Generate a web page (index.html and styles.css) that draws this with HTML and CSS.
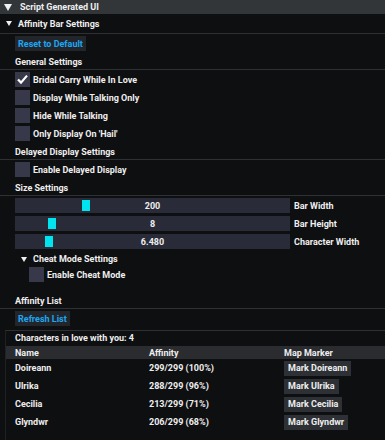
FILE: index.html
```html
<!DOCTYPE html>
<html>
<head>
<meta charset="utf-8">
<link rel="stylesheet" href="styles.css">
</head>
<body>
<div class="win">
  <div class="hdr"><span class="tri big"></span><span>Script Generated UI</span></div>
  <div class="node sep"><span class="tri"></span><span>Affinity Bar Settings</span></div>
  <div class="content">
    <div class="btn blue first">Reset to Default</div>
    <div class="label sep">General Settings</div>
    <div class="chk first"><span class="box"><svg viewBox="0 0 15 15" width="15" height="15"><path d="M3 7.4 L6 10.6 L12 3.6" fill="none" stroke="#fff" stroke-width="2.2"/></svg></span><span>Bridal Carry While In Love</span></div>
    <div class="chk"><span class="box"></span><span>Display While Talking Only</span></div>
    <div class="chk"><span class="box"></span><span>Hide While Talking</span></div>
    <div class="chk"><span class="box"></span><span>Only Display On 'Hail'</span></div>
    <div class="label sep">Delayed Display Settings</div>
    <div class="chk first"><span class="box"></span><span>Enable Delayed Display</span></div>
    <div class="label sep">Size Settings</div>
    <div class="slrow first"><div class="slider"><span class="grab" style="left:67px"></span><span class="val">200</span></div><span class="sllbl">Bar Width</span></div>
    <div class="slrow"><div class="slider"><span class="grab" style="left:33px"></span><span class="val">8</span></div><span class="sllbl">Bar Height</span></div>
    <div class="slrow"><div class="slider"><span class="grab" style="left:30px"></span><span class="val">6.480</span></div><span class="sllbl">Character Width</span></div>
    <div class="subnode"><span class="tri"></span><span>Cheat Mode Settings</span></div>
    <div class="chk sub"><span class="box"></span><span>Enable Cheat Mode</span></div>
    <div class="label sep spaced">Affinity List</div>
    <div class="btn blue first">Refresh List</div>
  </div>
  <div class="child">
    <div class="count">Characters in love with you: 4</div>
    <div class="table">
      <div class="trow thead"><span class="c1">Name</span><span class="c2">Affinity</span><span class="c3">Map Marker</span></div>
      <div class="trow"><span class="c1">Doireann</span><span class="c2">299/299 (100%)</span><span class="c3"><span class="btn mark">Mark Doireann</span></span></div>
      <div class="trow"><span class="c1">Ulrika</span><span class="c2">288/299 (96%)</span><span class="c3"><span class="btn mark">Mark Ulrika</span></span></div>
      <div class="trow"><span class="c1">Cecilia</span><span class="c2">213/299 (71%)</span><span class="c3"><span class="btn mark">Mark Cecilia</span></span></div>
      <div class="trow"><span class="c1">Glyndwr</span><span class="c2">206/299 (68%)</span><span class="c3"><span class="btn mark">Mark Glyndwr</span></span></div>
    </div>
  </div>
</div>
</body>
</html>
```

FILE: styles.css
```css
html, body {
  margin: 0;
  padding: 0;
  background: #0e0f11;
}
body {
  font-family: Roboto, "Liberation Sans", sans-serif;
  font-weight: 700;
  font-size: 9px;
  color: #eeeeee;
  width: 385px;
  height: 440px;
  overflow: hidden;
}
.win {
  display: flex;
  flex-direction: column;
}
.hdr {
  height: 14px;
  background: #323639;
  display: flex;
  align-items: center;
  padding-left: 4px;
  gap: 8px;
}
.tri {
  width: 0;
  height: 0;
  border-left: 3px solid transparent;
  border-right: 3px solid transparent;
  border-top: 5px solid #f0f0f0;
}
.tri.big {
  border-left-width: 4px;
  border-right-width: 4px;
  border-top-width: 7px;
}
.node {
  height: 19px;
  display: flex;
  align-items: center;
  padding-left: 6px;
  gap: 6px;
}
.sep {
  border-bottom: 1px solid #2e3033;
}
.content {
  display: flex;
  flex-direction: column;
  padding-left: 15px;
}
.content .sep {
  margin-left: -15px;
  padding-left: 15px;
}
.btn {
  display: inline-flex;
  align-items: center;
  height: 15px;
  padding: 0 3px;
  background: #22262b;
  align-self: flex-start;
}
.btn.blue {
  color: #1ea6f2;
}
.first {
  margin-top: 2px;
}
.label {
  height: 15px;
  margin-top: 3px;
  display: flex;
  align-items: center;
}
.label.spaced {
  margin-top: 11px;
}
.chk {
  height: 15px;
  display: flex;
  align-items: center;
  gap: 3px;
  margin-top: 3px;
}
.chk.first {
  margin-top: 2px;
}
.box {
  width: 15px;
  height: 15px;
  background: #37384a;
  display: block;
}
.box svg {
  display: block;
}
.slrow {
  height: 15px;
  display: flex;
  align-items: center;
  margin-top: 3px;
}
.slrow.first {
  margin-top: 2px;
}
.slider {
  position: relative;
  width: 275px;
  height: 15px;
  background: #2a2b39;
  display: flex;
  align-items: center;
  justify-content: center;
}
.grab {
  position: absolute;
  top: 2px;
  width: 8px;
  height: 11px;
  background: #00e4ef;
}
.val {
  position: relative;
}
.sllbl {
  margin-left: 4px;
}
.subnode {
  height: 14px;
  margin-top: 3px;
  display: flex;
  align-items: center;
  padding-left: 6px;
  gap: 6px;
}
.chk.sub {
  margin-left: 14px;
  margin-top: 1px;
}
.child {
  margin-top: 4px;
  border-top: 1px solid #2e3033;
  border-left: 1px solid #1f2124;
  margin-left: 5px;
  height: 110px;
}
.count {
  height: 14px;
  display: flex;
  align-items: center;
  padding-left: 9px;
}
.table {
  display: flex;
  flex-direction: column;
}
.trow {
  display: flex;
  align-items: center;
  height: 18px;
  padding-left: 9px;
}
.trow.thead {
  height: 13px;
  background: #2a2c30;
  margin-top: 1px;
}
.c1 { width: 134px; }
.c2 { width: 135px; }
.c3 { flex: 1; }
.btn.mark {
  background: #2d3034;
  color: #eeeeee;
  padding: 0 4px;
}
```
